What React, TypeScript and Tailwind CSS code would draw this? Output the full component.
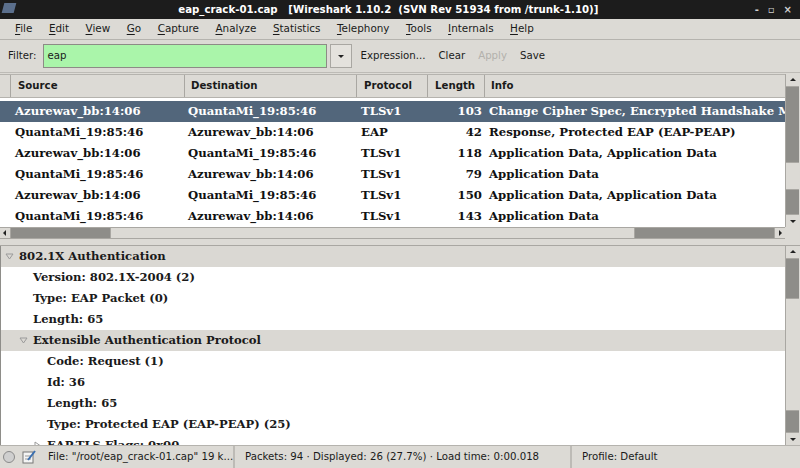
import React from 'react';

const menus = ['File', 'Edit', 'View', 'Go', 'Capture', 'Analyze', 'Statistics', 'Telephony', 'Tools', 'Internals', 'Help'];

const packets = [
  { src: 'Azurewav_bb:14:06', dst: 'QuantaMi_19:85:46', proto: 'TLSv1', len: 103, info: 'Change Cipher Spec, Encrypted Handshake Message' },
  { src: 'QuantaMi_19:85:46', dst: 'Azurewav_bb:14:06', proto: 'EAP', len: 42, info: 'Response, Protected EAP (EAP-PEAP)' },
  { src: 'Azurewav_bb:14:06', dst: 'QuantaMi_19:85:46', proto: 'TLSv1', len: 118, info: 'Application Data, Application Data' },
  { src: 'QuantaMi_19:85:46', dst: 'Azurewav_bb:14:06', proto: 'TLSv1', len: 79, info: 'Application Data' },
  { src: 'Azurewav_bb:14:06', dst: 'QuantaMi_19:85:46', proto: 'TLSv1', len: 150, info: 'Application Data, Application Data' },
  { src: 'QuantaMi_19:85:46', dst: 'Azurewav_bb:14:06', proto: 'TLSv1', len: 143, info: 'Application Data' },
];

const tree = [
  { level: 0, text: '802.1X Authentication', open: true },
  { level: 1, text: 'Version: 802.1X-2004 (2)' },
  { level: 1, text: 'Type: EAP Packet (0)' },
  { level: 1, text: 'Length: 65' },
  { level: 1, text: 'Extensible Authentication Protocol', open: true },
  { level: 2, text: 'Code: Request (1)' },
  { level: 2, text: 'Id: 36' },
  { level: 2, text: 'Length: 65' },
  { level: 2, text: 'Type: Protected EAP (EAP-PEAP) (25)' },
  { level: 2, text: 'EAP-TLS Flags: 0x00', closed: true },
];

const sans = "font-['DejaVu_Sans',sans-serif]";
const serif = "font-['DejaVu_Serif','Liberation_Serif',serif]";

const Arrow = ({ dir }: { dir: 'up' | 'down' | 'left' | 'right' }) => {
  const pts = {
    up: '1,5 4,2 7,5',
    down: '1,3 4,6 7,3',
    left: '5,1 2,4 5,7',
    right: '3,1 6,4 3,7',
  }[dir];
  return (
    <svg width="8" height="8" viewBox="0 0 8 8">
      <polygon points={pts} fill="#222" />
    </svg>
  );
};

const VScroll = ({ thumbTop, thumbH }: { thumbTop: string; thumbH: string }) => (
  <div className="flex-1 w-[14px] flex flex-col bg-[#cfcdc8] border-l border-[#a9a7a2]">
    <div className="h-[13px] flex items-center justify-center bg-[#dcdad5] border-b border-[#a9a7a2]">
      <Arrow dir="up" />
    </div>
    <div className="flex-1 flex flex-col bg-[#8e8d89]">
      <div className={thumbTop} />
      <div className={`${thumbH} bg-[#dcdad5] border-y border-[#a9a7a2]`} />
      <div className="flex-1" />
    </div>
    <div className="h-[13px] flex items-center justify-center bg-[#dcdad5] border-t border-[#a9a7a2]">
      <Arrow dir="down" />
    </div>
  </div>
);

const TreeTriangle = ({ open }: { open: boolean }) => (
  <svg width="9" height="9" viewBox="0 0 9 9" className="shrink-0">
    {open ? (
      <polygon points="1,2 8,2 4.5,7" fill="none" stroke="#9a9a9a" strokeWidth="1" />
    ) : (
      <polygon points="2,1 7,4.5 2,8" fill="none" stroke="#9a9a9a" strokeWidth="1" />
    )}
  </svg>
);

export default function App() {
  return (
    <div className={`w-[800px] h-[468px] flex flex-col bg-[#dcdad5] text-[#1a1a1a] overflow-hidden ${sans}`}>
      {/* Title bar */}
      <div className="h-[19px] bg-[#1c1c1c] flex items-center relative">
        <div className="absolute left-[3px] top-[3px] w-[12px] h-[10px] bg-[#5b6f8c] skew-x-[-15deg]" />
        <div className="flex-1 text-center text-white font-bold text-[10.2px] pl-[22px] whitespace-pre">
          eap_crack-01.cap   [Wireshark 1.10.2  (SVN Rev 51934 from /trunk-1.10)]
        </div>
        <div className="flex items-center gap-[9px] pr-[8px] text-[#cfcfcf] text-[10px] font-bold">
          <span>-</span>
          <span>▫</span>
          <span>×</span>
        </div>
      </div>

      {/* Menu */}
      <div className="h-[21px] flex items-center pl-[15px] gap-[16.5px] text-[10.4px] border-b border-[#b5b3ae]">
        {menus.map((m) => (
          <span key={m}>
            <span className="underline underline-offset-[2px]">{m[0]}</span>
            {m.slice(1)}
          </span>
        ))}
      </div>

      {/* Filter bar */}
      <div className="h-[33px] flex items-center pl-[8px] text-[10.2px] border-b border-[#bdbbb6]">
        <span className="mr-[7px]">Filter:</span>
        <div className="w-[284px] h-[24px] bg-[#aaf5aa] border border-[#8d8b86] flex items-center pl-[3px]">eap</div>
        <div className="ml-[3px] w-[22px] h-[24px] border border-[#a9a7a2] bg-[#e4e2dd] flex items-center justify-center">
          <Arrow dir="down" />
        </div>
        <span className="ml-[8px]">Expression...</span>
        <span className="ml-[13px]">Clear</span>
        <span className="ml-[13px] text-[#b3b1ac]">Apply</span>
        <span className="ml-[13px]">Save</span>
      </div>

      {/* Packet list */}
      <div className="h-[165px] flex mt-[1px]">
        <div className="flex-1 flex flex-col min-w-0">
          <div className="h-[24px] grid grid-cols-[11px_174px_172px_71px_57px_1fr] text-[10.2px] font-bold border-y border-[#b5b3ae]">
            <div className="border-r border-[#a9a7a2]" />
            <div className="border-r border-[#a9a7a2] flex items-center pl-[7px]">Source</div>
            <div className="border-r border-[#a9a7a2] flex items-center pl-[6px]">Destination</div>
            <div className="border-r border-[#a9a7a2] flex items-center pl-[7px]">Protocol</div>
            <div className="border-r border-[#a9a7a2] flex items-center pl-[7px]">Length</div>
            <div className="flex items-center pl-[6px]">Info</div>
          </div>
          <div className="flex-1 bg-white pt-[3px] overflow-hidden">
            {packets.map((p, i) => (
              <div
                key={i}
                className={`h-[21px] grid grid-cols-[11px_174px_172px_71px_57px_1fr] items-center text-[11.7px] font-bold whitespace-nowrap ${serif} ${
                  i === 0 ? 'bg-[#52667b] text-white' : 'text-[#111]'
                }`}
              >
                <div />
                <div className="pl-[4px]">{p.src}</div>
                <div className="pl-[3px]">{p.dst}</div>
                <div className="pl-[4px]">{p.proto}</div>
                <div className="text-right pr-[3px]">{p.len}</div>
                <div className="pl-[4px] overflow-hidden">{p.info}</div>
              </div>
            ))}
          </div>
          {/* horizontal scrollbar */}
          <div className="h-[12px] flex bg-[#cfcdc8] border-y border-[#a9a7a2]">
            <div className="w-[11px] flex items-center justify-center bg-[#dcdad5] border-r border-[#a9a7a2]">
              <Arrow dir="left" />
            </div>
            <div className="w-[99px] bg-[#8e8d89]" />
            <div className="w-[525px] bg-[#dcdad5] border-x border-[#a9a7a2]" />
            <div className="flex-1 bg-[#8e8d89]" />
            <div className="w-[11px] flex items-center justify-center bg-[#dcdad5] border-l border-[#a9a7a2]">
              <Arrow dir="right" />
            </div>
          </div>
        </div>
        <div className="w-[15px] flex flex-col">
          <VScroll thumbTop="h-[75px]" thumbH="h-[28px]" />
          <div className="h-[12px]" />
        </div>
      </div>

      {/* Pane handle */}
      <div className="h-[7px] border-b border-[#a9a7a2]" />

      {/* Details */}
      <div className="flex-1 flex min-h-0">
        <div className="flex-1 bg-white overflow-hidden border-l border-[#8e8d89]">
          {tree.map((t, i) => (
            <div
              key={i}
              className={`h-[21px] flex items-center text-[11.6px] font-bold whitespace-nowrap ${serif} ${
                t.open ? 'bg-[#dad8d3]' : ''
              }`}
              style={{ paddingLeft: 4 + t.level * 14 }}
            >
              <div className="w-[14px] flex items-center">
                {t.open && <TreeTriangle open />}
                {t.closed && <TreeTriangle open={false} />}
              </div>
              <span>{t.text}</span>
            </div>
          ))}
        </div>
        <div className="w-[15px] flex flex-col">
          <VScroll thumbTop="h-[39px]" thumbH="h-[113px]" />
        </div>
      </div>

      {/* Status bar */}
      <div className="h-[23px] flex items-center text-[10.2px] border-t border-[#b5b3ae] bg-[#dcdad5]">
        <div className="w-[46px] flex items-center gap-[7px] pl-[3px]">
          <div className="w-[12px] h-[12px] rounded-full border border-[#8a8a8a] bg-[#cfcfcf]" />
          <svg width="14" height="14" viewBox="0 0 14 14">
            <rect x="1" y="2" width="10" height="11" fill="#f4f4f4" stroke="#777" />
            <line x1="3" y1="6" x2="9" y2="6" stroke="#999" />
            <line x1="3" y1="9" x2="9" y2="9" stroke="#999" />
            <line x1="6" y1="10" x2="13" y2="1" stroke="#3a6fb0" strokeWidth="2" />
          </svg>
        </div>
        <div className="w-[189px] h-full flex items-center pl-[2px] border-r-2 border-[#bdbbb6] whitespace-nowrap overflow-hidden">
          File: "/root/eap_crack-01.cap" 19 k...
        </div>
        <div className="w-[337px] h-full flex items-center pl-[10px] border-r-2 border-[#bdbbb6] whitespace-nowrap">
          Packets: 94 · Displayed: 26 (27.7%) · Load time: 0:00.018
        </div>
        <div className="flex-1 pl-[10px]">Profile: Default</div>
      </div>
    </div>
  );
}
